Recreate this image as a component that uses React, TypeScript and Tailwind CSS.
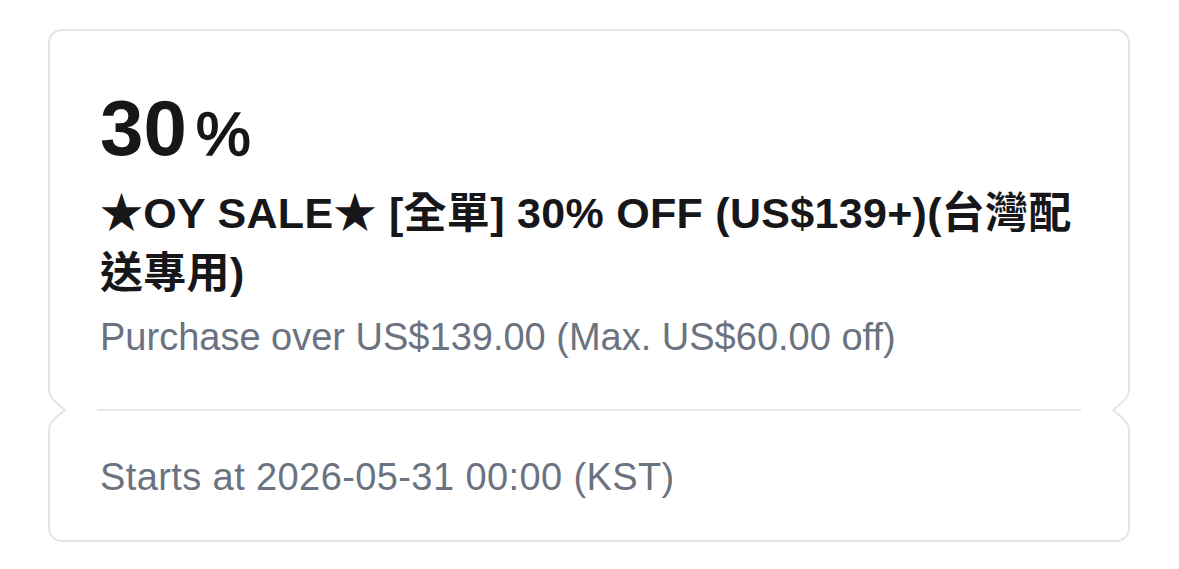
const Notch = ({ side }: { side: "left" | "right" }) => {
  const d =
    side === "left"
      ? "M1 0 L1 4 C1 14, 10 19, 17 25 C10 31, 1 36, 1 46 L1 50"
      : "M21 0 L21 4 C21 14, 12 19, 5 25 C12 31, 21 36, 21 46 L21 50";
  return (
    <svg
      className={`absolute top-[-24px] h-[50px] w-[22px] ${side === "left" ? "left-[-2px]" : "right-[-2px]"}`}
      viewBox="0 0 22 50"
    >
      <rect x={side === "left" ? 0 : 19} y={3} width={3} height={44} fill="#ffffff" />
      <path d={d} fill="none" stroke="#e5e5e5" strokeWidth={2} />
    </svg>
  );
};

const App = () => {
  return (
    <div
      className="min-h-screen bg-white pt-[29px] pl-[48px]"
      style={{ fontFamily: '"Liberation Sans", "Noto Sans CJK TC", sans-serif' }}
    >
      <div className="w-[1082px] rounded-[14px] border-2 border-[#e5e5e5]">
        <div className="px-[50px] pt-[58px] pb-[50px]">
          <div className="flex items-baseline text-[#17171a]">
            <span className="text-[78px] font-bold leading-none">30</span>
            <span className="ml-[9px] text-[62px] font-normal leading-none [-webkit-text-stroke:1.5px_#17171a]">
              %
            </span>
          </div>
          <h2 className="mt-[16px] text-[43px] font-bold leading-[60px] tracking-[0.3px] text-[#17171a]">
            ★OY SALE★ [全單] 30% OFF (US$139+)(台灣配送專用)
          </h2>
          <p className="mt-[12px] text-[38px] leading-[44px] text-[#6b7280]">
            Purchase over US$139.00 (Max. US$60.00 off)
          </p>
        </div>
        <div className="relative h-[2px]">
          <div className="mx-[47px] h-full bg-[#e8e8e8]" />
          <Notch side="left" />
          <Notch side="right" />
        </div>
        <div className="px-[50px] pt-[44px] pb-[41px]">
          <p className="text-[38px] leading-[44px] tracking-[0.4px] text-[#6b7280]">
            Starts at 2026-05-31 00:00 (KST)
          </p>
        </div>
      </div>
    </div>
  );
};

export default App;
